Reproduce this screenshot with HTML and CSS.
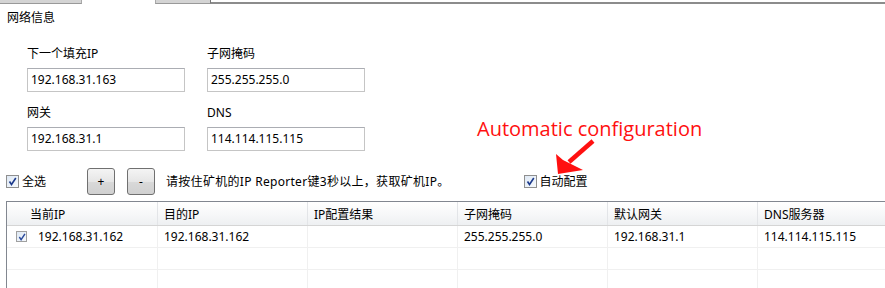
FILE: index.html
```html
<!DOCTYPE html>
<html lang="zh-CN">
<head>
    <meta charset="UTF-8">
    <title>网络信息</title>
    <link rel="stylesheet" href="styles.css">
</head>
<body>
    <!-- 上部タブ -->
    <div class="tabs">
        <span class="tab"></span>
        <span class="tab active"></span>
        <span class="tab small"></span>
        <span class="tabRest"></span>
    </div>

    <div class="panel">
        <div class="title">网络信息</div>

        <div class="fields">
            <div class="field">
                <div class="label">下一个填充IP</div>
                <div class="input">192.168.31.163</div>
            </div>
            <div class="field">
                <div class="label">子网掩码</div>
                <div class="input">255.255.255.0</div>
            </div>
            <div class="field">
                <div class="label">网关</div>
                <div class="input">192.168.31.1</div>
            </div>
            <div class="field">
                <div class="label">DNS</div>
                <div class="input">114.114.115.115</div>
            </div>
        </div>

        <div class="toolbar">
            <label class="check">
                <span class="box"><svg width="9" height="9" viewBox="0 0 9 9"><path d="M1.5 4.5 L3.5 7.5 L7.8 1" fill="none" stroke="#1c3a8c" stroke-width="1.6"/></svg></span>
                全选
            </label>
            <button class="btn plus">+</button>
            <button class="btn">-</button>
            <span class="hint">请按住矿机的IP Reporter键3秒以上，获取矿机IP。</span>
            <label class="check auto">
                <span class="box"><svg width="9" height="9" viewBox="0 0 9 9"><path d="M1.5 4.5 L3.5 7.5 L7.8 1" fill="none" stroke="#1c3a8c" stroke-width="1.6"/></svg></span>
                自动配置
            </label>
        </div>

        <div class="grid">
            <div class="row head">
                <div class="cell first">当前IP</div>
                <div class="cell">目的IP</div>
                <div class="cell">IP配置结果</div>
                <div class="cell">子网掩码</div>
                <div class="cell">默认网关</div>
                <div class="cell">DNS服务器</div>
            </div>
            <div class="row">
                <div class="cell first"><span class="box small"><svg width="8" height="8" viewBox="0 0 9 9"><path d="M1.5 4.5 L3.5 7.5 L7.8 1" fill="none" stroke="#2a4a9c" stroke-width="1.6"/></svg></span>192.168.31.162</div>
                <div class="cell">192.168.31.162</div>
                <div class="cell"></div>
                <div class="cell">255.255.255.0</div>
                <div class="cell">192.168.31.1</div>
                <div class="cell">114.114.115.115</div>
            </div>
            <div class="row">
                <div class="cell first"></div>
                <div class="cell"></div>
                <div class="cell"></div>
                <div class="cell"></div>
                <div class="cell"></div>
                <div class="cell"></div>
            </div>
            <div class="row">
                <div class="cell first"></div>
                <div class="cell"></div>
                <div class="cell"></div>
                <div class="cell"></div>
                <div class="cell"></div>
                <div class="cell"></div>
            </div>
        </div>
    </div>

    <!-- 注釈 -->
    <div class="note">Automatic configuration</div>
    <svg class="arrow" width="60" height="45" viewBox="540 135 60 45">
        <path d="M593 141 L569 162" stroke="#ff1010" stroke-width="4.5" fill="none"/>
        <polygon points="558,174 556,154 563,160 569,163 583,170" fill="#ff1010"/>
    </svg>
</body>
</html>
```

FILE: styles.css
```css
body {
    margin: 0;
    background: #fff;
    font-family: "Noto Sans", "Noto Sans CJK SC", sans-serif;
    font-size: 12px;
    color: #000;
    overflow: hidden;
    width: 885px;
    height: 288px;
    position: relative;
}

.tabs {
    display: flex;
    height: 4px;
}

.tab {
    width: 82px;
    background: #d4d4d4;
    border-bottom: 1px solid #999;
    border-right: 1px solid #aaa;
    box-sizing: border-box;
}

.tab.active {
    width: 73px;
    background: #fff;
    border: none;
}

.tab.small {
    width: 56px;
    border-left: 1px solid #aaa;
    border-right: 1px solid #777;
}

.tabRest {
    flex: 1;
    border-bottom: 2px solid #8c8c8c;
    height: 2px;
}

.panel {
    padding-left: 7px;
}

.title {
    margin-top: 4px;
    line-height: 20px;
}

.fields {
    display: grid;
    grid-template-columns: 180px 180px;
    row-gap: 12px;
    margin-top: 17px;
    margin-left: 20px;
}

.label {
    line-height: 18px;
    margin-bottom: 5px;
}

.input {
    width: 158px;
    height: 24px;
    box-sizing: border-box;
    border: 1px solid #c5c5c5;
    border-top-color: #abadb3;
    padding-left: 3px;
    line-height: 22px;
}

.toolbar {
    display: flex;
    align-items: center;
    height: 28px;
    margin-top: 16px;
    margin-left: -1px;
}

.check {
    display: flex;
    align-items: center;
    gap: 3px;
}

.box {
    width: 13px;
    height: 13px;
    box-sizing: border-box;
    border: 1px solid #8f8f8f;
    background: linear-gradient(135deg, #dfe9f5, #f6f9fc);
    display: inline-flex;
    align-items: center;
    justify-content: center;
}

.box.small {
    width: 11px;
    height: 11px;
    border-color: #a0a0a0;
    margin-right: 11px;
    margin-left: 3px;
}

.btn {
    width: 28px;
    height: 27px;
    border: 1px solid #707070;
    border-radius: 3px;
    background: linear-gradient(#f4f4f4, #e6e6e6 50%, #d9d9d9 51%, #d0d0d0);
    font-family: inherit;
    font-size: 12px;
    padding: 0;
    margin-left: 12px;
}

.btn.plus {
    margin-left: 41px;
}

.hint {
    margin-left: 11px;
    letter-spacing: 0.3px;
}

.check.auto {
    margin-left: 74px;
}

.grid {
    margin-top: 6px;
    margin-left: -1px;
    border-left: 1px solid #828790;
    border-top: 1px solid #828790;
    width: 910px;
}

.row {
    display: flex;
    height: 21px;
    border-bottom: 1px solid #f0f0f0;
}

.row.head {
    height: 23px;
    background: linear-gradient(#ffffff, #f7f8f9 50%, #eef0f2);
    border-bottom: 1px solid #d5d5d5;
}

.cell {
    width: 150px;
    border-right: 1px solid #f0f0f0;
    padding-left: 6px;
    box-sizing: border-box;
    display: flex;
    align-items: center;
}

.cell.first {
    width: 151px;
}

.head .cell {
    border-right-color: #e3e5e8;
}

.head .cell.first {
    padding-left: 23px;
}

.note {
    position: absolute;
    left: 477px;
    top: 115px;
    font-size: 20px;
    color: #ff1010;
    font-family: "Open Sans", sans-serif;
}

.arrow {
    position: absolute;
    left: 540px;
    top: 135px;
}
```
